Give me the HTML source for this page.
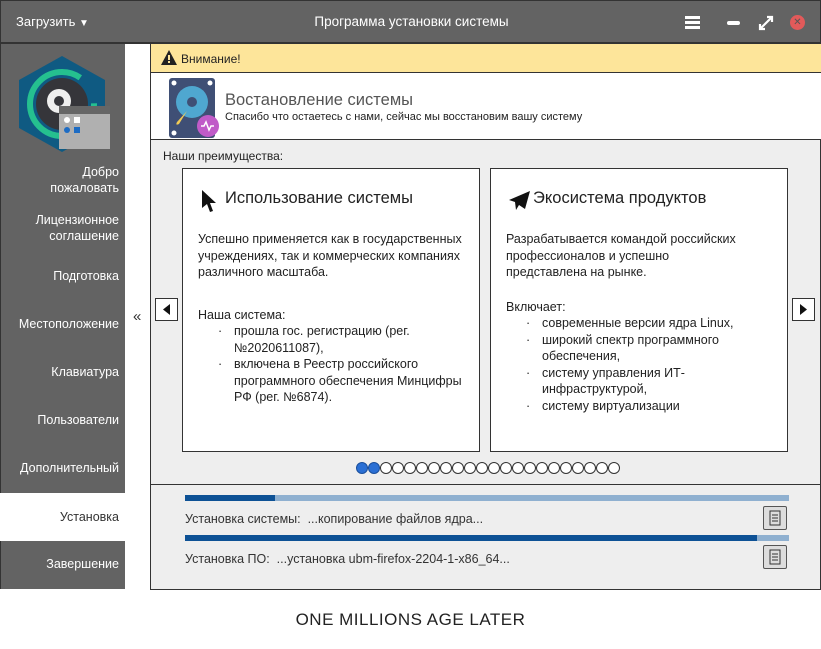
<!DOCTYPE html>
<html><head><meta charset="utf-8"><style>
*{margin:0;padding:0;box-sizing:border-box}
body{width:821px;height:649px;background:#fff;font-family:"Liberation Sans","DejaVu Sans",sans-serif;position:relative;overflow:hidden;color:#222}
.abs{position:absolute}
#title{left:0;top:0;width:821px;height:44px;background:#636363;border:1px solid #333;border-bottom:2px solid #333}
#side{left:0;top:44px;width:125px;height:545px;background:#636363;border-left:1px solid #333}
.si{position:absolute;right:6px;width:125px;text-align:right;color:#fff;font-size:12.5px;line-height:16px}
#main{left:150px;top:44px;width:671px;height:546px;background:#eee;border:1px solid #333;border-top:none}
.card{position:absolute;top:124px;width:298px;height:284px;background:#fff;border:1px solid #333;font-size:12.5px;line-height:16.5px}
.card h2{font-weight:normal;font-size:16.5px;position:absolute;left:42px;top:21px}
.card p{position:absolute;left:15px;width:270px}
.card ul{list-style:none}
.card li{position:relative;padding-left:36px}
.card li:before{content:"·";position:absolute;left:20px}
.arr{position:absolute;top:254px;width:23px;height:23px;border:1px solid #333;background:#fff}
.dots{position:absolute;left:205px;top:418px;display:flex}
.dots span{width:12px;height:12px;border-radius:50%;border:1px solid #333;background:#fff}
.dots span.a{background:#2a6fd4;border-color:#1a4f9c}
.bar{position:absolute;left:34px;width:604px;height:6px;background:#8fb0d0}
.bar i{display:block;height:6px;background:#0d5195}
.log{position:absolute;left:612px;width:24px;height:24px;border:1px solid #555;background:#ddd;border-radius:2px}
.lt{position:absolute;left:34px;font-size:12.5px;color:#333}
</style></head><body>
<div id="title" class="abs">
 <div class="abs" style="left:15px;top:13px;color:#fff;font-size:13px">Загрузить <span style="font-size:10px">▼</span></div>
 <div class="abs" style="left:0;width:821px;top:13px;text-align:center;color:#fff;font-size:13.5px">Программа установки системы</div>
 <div class="abs" style="left:684px;top:15px;width:15px;height:3px;background:#fff;box-shadow:0 5px 0 #fff,0 10px 0 #fff"></div>
 <div class="abs" style="left:726px;top:20px;width:13px;height:4px;background:#fff;border-radius:2px"></div>
 <svg class="abs" style="left:757px;top:14px" width="16" height="16" viewBox="0 0 16 16"><path d="M3 13L13 3M9 2h5v5M2 9v5h5" stroke="#fff" stroke-width="2.2" fill="none"/></svg>
 <div class="abs" style="left:789px;top:14px;width:15px;height:15px;border-radius:50%;background:#e25a5a;color:#555;font-size:10px;line-height:15px;text-align:center;font-weight:bold">✕</div>
</div>
<div id="side" class="abs">
 <svg class="abs" style="left:16px;top:10px" width="95" height="100" viewBox="0 0 95 100">
  <polygon points="45,2 88,26 88,74 45,98 2,74 2,26" fill="#0f5a82"/>
  <circle cx="45" cy="50" r="32" fill="none" stroke="#25c08f" stroke-width="6" stroke-dasharray="170 30"/>
  <circle cx="45" cy="50" r="26" fill="#35353a"/>
  <circle cx="42" cy="47" r="12" fill="#eee"/><circle cx="42" cy="47" r="5" fill="#35353a"/>
  <rect x="42" y="52" width="51" height="43" fill="#b0b0b0"/><rect x="42" y="52" width="51" height="8" fill="#666"/>
  <circle cx="50" cy="66" r="3" fill="#fff"/><rect x="57" y="63" width="6" height="6" fill="#fff"/>
  <circle cx="50" cy="76" r="3" fill="#1d6cc4"/><rect x="57" y="73" width="6" height="6" fill="#1d6cc4"/>
 </svg>
 <div class="si" style="top:120px">Добро<br>пожаловать</div>
 <div class="si" style="top:168px">Лицензионное<br>соглашение</div>
 <div class="si" style="top:224px">Подготовка</div>
 <div class="si" style="top:272px">Местоположение</div>
 <div class="si" style="top:320px">Клавиатура</div>
 <div class="si" style="top:368px">Пользователи</div>
 <div class="si" style="top:416px">Дополнительный</div>
 <div class="abs" style="left:-1px;top:449px;width:126px;height:48px;background:#fff"></div>
 <div class="si" style="top:465px;color:#333">Установка</div>
 <div class="si" style="top:512px">Завершение</div>
</div>
<div class="abs" style="left:133px;top:308px;font-size:15px;color:#333">«</div>
<div id="main" class="abs">
 <div class="abs" style="left:0;top:0;width:670px;height:29px;background:#fde59a;border-bottom:1px solid #333"></div>
 <svg class="abs" style="left:10px;top:6px" width="16" height="15" viewBox="0 0 16 15"><polygon points="8,0 16,15 0,15" fill="#222"/><rect x="7" y="5" width="2" height="5" fill="#fde59a"/><rect x="7" y="11" width="2" height="2" fill="#fde59a"/></svg>
 <div class="abs" style="left:30px;top:8px;font-size:12px">Внимание!</div>
 <div class="abs" style="left:0;top:29px;width:670px;height:67px;background:#fff;border-bottom:1px solid #333"></div>
 <svg class="abs" style="left:18px;top:34px" width="52" height="62" viewBox="0 0 52 62">
  <rect x="0" y="0" width="46" height="60" rx="3" fill="#3f4f75"/>
  <circle cx="5" cy="5" r="2.5" fill="#fff"/><circle cx="41" cy="5" r="2.5" fill="#fff"/><circle cx="5" cy="55" r="2.5" fill="#fff"/>
  <circle cx="23" cy="24" r="16" fill="#4fa7d0"/><circle cx="23" cy="24" r="5" fill="#3f4f75"/>
  <path d="M18 33 L8 44 Q6 48 10 46 Z" fill="#f2cb55"/>
  <circle cx="39" cy="48" r="11" fill="#c05bc8"/><path d="M32 48h3l2-4 3 8 2-4h3" stroke="#fff" stroke-width="1.5" fill="none"/>
 </svg>
 <div class="abs" style="left:74px;top:47px;font-size:16.5px;color:#555">Востановление системы</div>
 <div class="abs" style="left:74px;top:67px;font-size:11px">Спасибо что остаетесь с нами, сейчас мы восстановим вашу систему</div>
 <div class="abs" style="left:12px;top:105px;font-size:12px">Наши преимущества:</div>
 <div class="card" style="left:31px">
  <svg class="abs" style="left:18px;top:20px" width="16" height="24" viewBox="0 0 16 24"><path d="M1 1L15 14H9L12 22 9 23 6 15 1 19Z" fill="#111"/></svg>
  <h2>Использование системы</h2>
  <p style="top:62px">Успешно применяется как в государственных учреждениях, так и коммерческих компаниях различного масштаба.</p>
  <p style="top:138px">Наша система:</p>
  <ul class="abs" style="left:15px;top:154px;width:275px"><li>прошла гос. регистрацию (рег. №2020611087),</li><li>включена в Реестр российского программного обеспечения Минцифры РФ (рег. №6874).</li></ul>
 </div>
 <div class="card" style="left:339px">
  <svg class="abs" style="left:18px;top:22px" width="22" height="20" viewBox="0 0 22 20"><path d="M21 0L0 9 6 11 7 19 10 14 16 18Z" fill="#111"/></svg>
  <h2>Экосистема продуктов</h2>
  <p style="top:62px;width:236px">Разрабатывается командой российских профессионалов и успешно представлена на рынке.</p>
  <p style="top:130px">Включает:</p>
  <ul class="abs" style="left:15px;top:146px;width:275px"><li>современные версии ядра Linux,</li><li>широкий спектр программного обеспечения,</li><li>систему управления ИТ-инфраструктурой,</li><li>систему виртуализации</li></ul>
 </div>
 <div class="arr" style="left:4px"><svg width="21" height="21"><polygon points="14,5 14,16 7,10.5" fill="#111"/></svg></div>
 <div class="arr" style="left:641px"><svg width="21" height="21"><polygon points="7,5 7,16 14,10.5" fill="#111"/></svg></div>
 <div class="dots"><span class="a"></span><span class="a"></span><span></span><span></span><span></span><span></span><span></span><span></span><span></span><span></span><span></span><span></span><span></span><span></span><span></span><span></span><span></span><span></span><span></span><span></span><span></span><span></span></div>
 <div class="abs" style="left:0;top:440px;width:670px;height:1px;background:#333"></div>
 <div class="bar" style="top:451px"><i style="width:90px"></i></div>
 <div class="lt" style="top:468px">Установка системы: &nbsp;...копирование файлов ядра...</div>
 <div class="log" style="top:462px"><svg width="22" height="22"><rect x="6" y="4" width="10" height="14" fill="none" stroke="#333"/><path d="M8 8h6M8 11h6M8 14h6" stroke="#333"/></svg></div>
 <div class="bar" style="top:491px"><i style="width:572px"></i></div>
 <div class="lt" style="top:508px">Установка ПО: &nbsp;...установка ubm-firefox-2204-1-x86_64...</div>
 <div class="log" style="top:501px"><svg width="22" height="22"><rect x="6" y="4" width="10" height="14" fill="none" stroke="#333"/><path d="M8 8h6M8 11h6M8 14h6" stroke="#333"/></svg></div>
</div>
<div class="abs" style="left:0;width:821px;top:610px;text-align:center;font-size:17px;letter-spacing:0.5px;color:#222">ONE MILLIONS AGE LATER</div>
</body></html>
